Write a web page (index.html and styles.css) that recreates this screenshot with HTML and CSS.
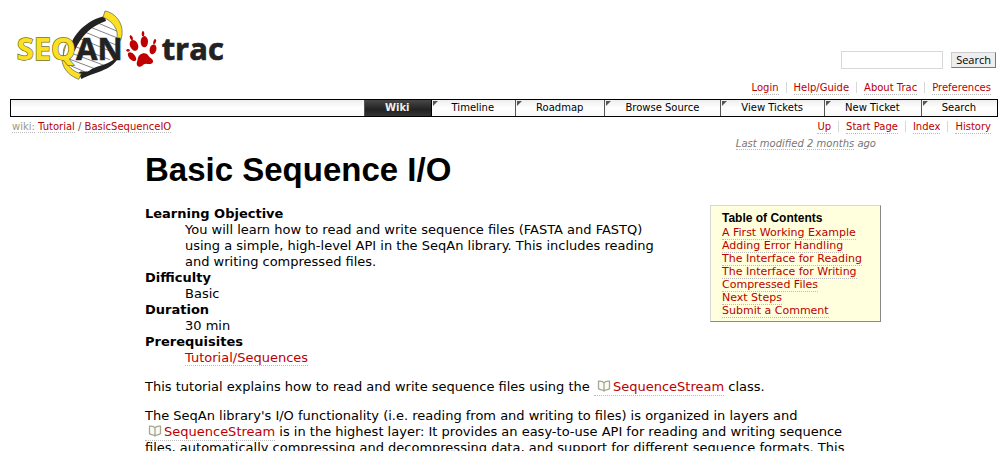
FILE: index.html
```html
<!DOCTYPE html>
<html lang="en">
<head>
<meta charset="utf-8">
<title>Tutorial/BasicSequenceIO – SeqAn</title>
<link rel="stylesheet" href="styles.css">
</head>
<body>
<svg class="defs" aria-hidden="true">
  <symbol id="book" viewBox="0 0 14 12">
    <path d="M7 3C6 1.200 4 .8 1.500 1.200V8.500C3 10.500 5.500 9.500 7 11C8.500 9.500 11 10.500 12.500 8.500V1.200C10 .8 8 1.200 7 3V11" fill="#fbfbf4" stroke="#a6a694" stroke-width="1.300"/>
  </symbol>
</svg>
<header class="banner">
  <a class="logo" href="#" aria-label="SeqAn trac">
    <svg width="220" height="80" viewBox="0 0 660 240">
      <path d="M185 128C205 88 240 60 286 44L328 104V168C290 178 245 192 212 212L168 170Z" fill="#fff"/>
      <g stroke="#444" stroke-width="2" fill="none">
        <path d="M264 54L320 78M240 66L330 102M222 80L328 124M204 98L300 138M188 122L300 164M178 142L290 184M172 160L262 194M182 182L232 204"/>
      </g>
      <path d="M176 138C188 86 230 46 284 33L288 48C246 62 214 90 194 138Z" fill="#222"/>
      <path d="M206 204C214 194 224 206 240 196C262 180 284 186 326 154C310 196 262 198 214 222Z" fill="#222"/>
      <path d="M285 18C318 23 348 62 332 106L320 104C328 74 308 48 279 37Z" fill="#fbe122" stroke="#555" stroke-width="2"/>
      <path d="M168 118C156 134 158 156 170 174C180 190 194 202 214 206L206 223C178 212 158 192 156 164Z" fill="#fbe122" stroke="#555" stroke-width="2"/>
      <g class="wordmark">
        <text class="seq" x="20" y="166">SEQ</text>
        <text x="198" y="166">AN</text>
        <text x="455" y="165">trac</text>
      </g>
      <g fill="#c00000">
        <ellipse cx="372" cy="121" rx="12" ry="17" transform="rotate(-25 372 121)"/>
        <ellipse cx="403" cy="110" rx="11" ry="17"/>
        <ellipse cx="429" cy="133" rx="10" ry="15" transform="rotate(15 429 133)"/>
        <ellipse cx="366" cy="155" rx="9" ry="16" transform="rotate(-42 366 155)"/>
        <ellipse cx="364" cy="98" rx="4" ry="8" transform="rotate(-25 364 98)"/>
        <ellipse cx="399" cy="86" rx="4" ry="8"/>
        <ellipse cx="434" cy="110" rx="4" ry="8" transform="rotate(20 434 110)"/>
        <ellipse cx="354" cy="136" rx="5" ry="4"/>
        <path d="M389 150C398 141 413 144 416 153C420 160 430 161 429 170C427 179 416 177 408 176C399 177 396 185 388 185C379 184 379 174 382 167C384 160 384 155 389 150Z"/>
      </g>
    </svg>
  </a>
  <form class="search">
    <input class="search-box" type="text" aria-label="Search">
    <button class="search-button" type="button">Search</button>
  </form>
  <nav class="links" aria-label="Account">
    <a href="#">Login</a><a href="#">Help/Guide</a><a href="#">About Trac</a><a href="#">Preferences</a>
  </nav>
</header>
<nav class="mainnav" aria-label="Main">
  <a class="active" href="#">Wiki</a><a href="#">Timeline</a><a href="#">Roadmap</a><a href="#">Browse Source</a><a href="#">View Tickets</a><a href="#">New Ticket</a><a href="#">Search</a>
</nav>
<div class="context">
  <div class="path"><a class="muted" href="#">wiki:</a> <a href="#">Tutorial</a> / <a href="#">BasicSequenceIO</a></div>
  <nav class="links" aria-label="Context">
    <a href="#">Up</a><a href="#">Start Page</a><a href="#">Index</a><a href="#">History</a>
  </nav>
</div>
<main class="content">
  <div class="modified"><a href="#">Last modified</a> <a href="#">2 months</a> ago</div>
  <h1>Basic Sequence I/O</h1>
  <aside class="toc">
    <h2>Table of Contents</h2>
    <ul>
      <li><a href="#">A First Working Example</a></li>
      <li><a href="#">Adding Error Handling</a></li>
      <li><a href="#">The Interface for Reading</a></li>
      <li><a href="#">The Interface for Writing</a></li>
      <li><a href="#">Compressed Files</a></li>
      <li><a href="#">Next Steps</a></li>
      <li><a href="#">Submit a Comment</a></li>
    </ul>
  </aside>
  <dl>
    <dt>Learning Objective</dt>
    <dd>You will learn how to read and write sequence files (FASTA and FASTQ) using a simple, high-level API in the SeqAn library. This includes reading and writing compressed files.</dd>
    <dt>Difficulty</dt>
    <dd>Basic</dd>
    <dt>Duration</dt>
    <dd>30 min</dd>
    <dt>Prerequisites</dt>
    <dd><a href="#">Tutorial/Sequences</a></dd>
  </dl>
  <p>This tutorial explains how to read and write sequence files using the <a class="api" href="#"><svg class="book"><use href="#book"/></svg>SequenceStream</a> class.</p>
  <p>The SeqAn library's I/O functionality (i.e. reading from and writing to files) is organized in layers and <a class="api" href="#"><svg class="book"><use href="#book"/></svg>SequenceStream</a> is in the highest layer: It provides an easy-to-use API for reading and writing sequence files, automatically compressing and decompressing data, and support for different sequence formats. This</p>
</main>
</body>
</html>
```
FILE: styles.css
```css
* { box-sizing: border-box; }
html { overflow: hidden; }
body {
  margin: 5px 10px 0;
  background: #fff;
  color: #000;
  font: 13px/16px "DejaVu Sans", sans-serif;
}
a {
  color: #b00;
  text-decoration: none;
  border-bottom: 1px dotted #bbb;
}
.defs { position: absolute; width: 0; height: 0; }

.banner {
  display: grid;
  grid-template-columns: 1fr auto;
  grid-template-rows: 77px 17px;
}
.logo { grid-row: 1 / 3; height: 80px; border: 0; justify-self: start; }
.logo svg { display: block; }
.wordmark {
  fill: #222;
  stroke: #222;
  stroke-width: 2px;
  font: bold 93px "Open Sans", sans-serif;
}
.wordmark .seq {
  fill: #fbe122;
  stroke: #776c20;
  stroke-width: 4px;
  paint-order: stroke;
}
.search {
  display: flex;
  align-items: center;
  justify-content: flex-end;
  gap: 8px;
  align-self: end;
  padding: 0 2px 13px 0;
}
.search-box {
  width: 102px;
  height: 18px;
  border: 1px solid #d7d7d7;
  padding: 0 4px;
}
.search-button {
  height: 16px;
  padding: 0 4px;
  border: 1px solid;
  border-color: #ccc #777 #777 #ccc;
  background: #eee;
  color: #000;
  font: 11px/14px "Open Sans", sans-serif;
}
.links {
  display: flex;
  justify-content: flex-end;
  align-items: start;
  font-size: 10px;
  line-height: 12px;
  padding-right: 7px;
}
.links a { position: relative; margin-left: 15px; }
.links a + a::before {
  content: "";
  position: absolute;
  left: -8px;
  top: 0;
  height: 11px;
  border-left: 1px solid #d7d7d7;
}

.mainnav {
  display: flex;
  justify-content: flex-end;
  border: 1px solid #000;
  background: linear-gradient(#eee, #fff 50%, #f8f8f8);
  font-size: 10px;
  line-height: 16px;
}
.mainnav a {
  padding: 0 21px 0 20px;
  border: 0;
  border-left: 1px solid #555;
  background: linear-gradient(135deg, #555 3px, transparent 4px) 1px 1px no-repeat;
  color: #000;
}
.mainnav .active {
  background: linear-gradient(#484848, #222 60%, #333);
  color: #eee;
  font-weight: bold;
}
.mainnav .active + a { border-left-color: #000; }

.context {
  display: flex;
  justify-content: space-between;
  padding-top: 4px;
  color: #555;
  font-size: 10px;
  line-height: 12px;
}
.path { padding-left: 2px; }
.muted { color: #998; }

.content {
  max-width: 754px;
  margin: 0 auto;
  padding-left: 18px;
}
.modified {
  padding: 3px 5px 0 0;
  color: #777;
  font-size: 10px;
  font-style: italic;
  line-height: 13px;
  text-align: right;
}
.modified a { color: #777; }
h1 {
  margin: 0 0 15px;
  font: bold 33px/40px "Liberation Sans", Arial, sans-serif;
}
.toc {
  float: right;
  width: 171px;
  margin: 0 0 20px 40px;
  padding: 5px 11px 4px;
  border: 1px solid;
  border-color: #d7d7d7 #888 #888 #d7d7d7;
  background: #ffd;
  font-size: 11px;
  line-height: 13px;
}
.toc h2 { margin: 0; font: bold 12px/15px "Liberation Sans", Arial, sans-serif; }
.toc ul { margin: 0; padding: 0; list-style: none; }
dl, dd, p { margin: 0; }
dl { padding-top: 1px; }
dt { font-weight: bold; }
dd { padding-left: 40px; }
p { margin-top: 13px; padding-right: 6px; }
.api { padding-left: 3px; padding-bottom: 1px; white-space: nowrap; }
.book { width: 14px; height: 12px; margin-right: 2px; vertical-align: -1px; }
```
